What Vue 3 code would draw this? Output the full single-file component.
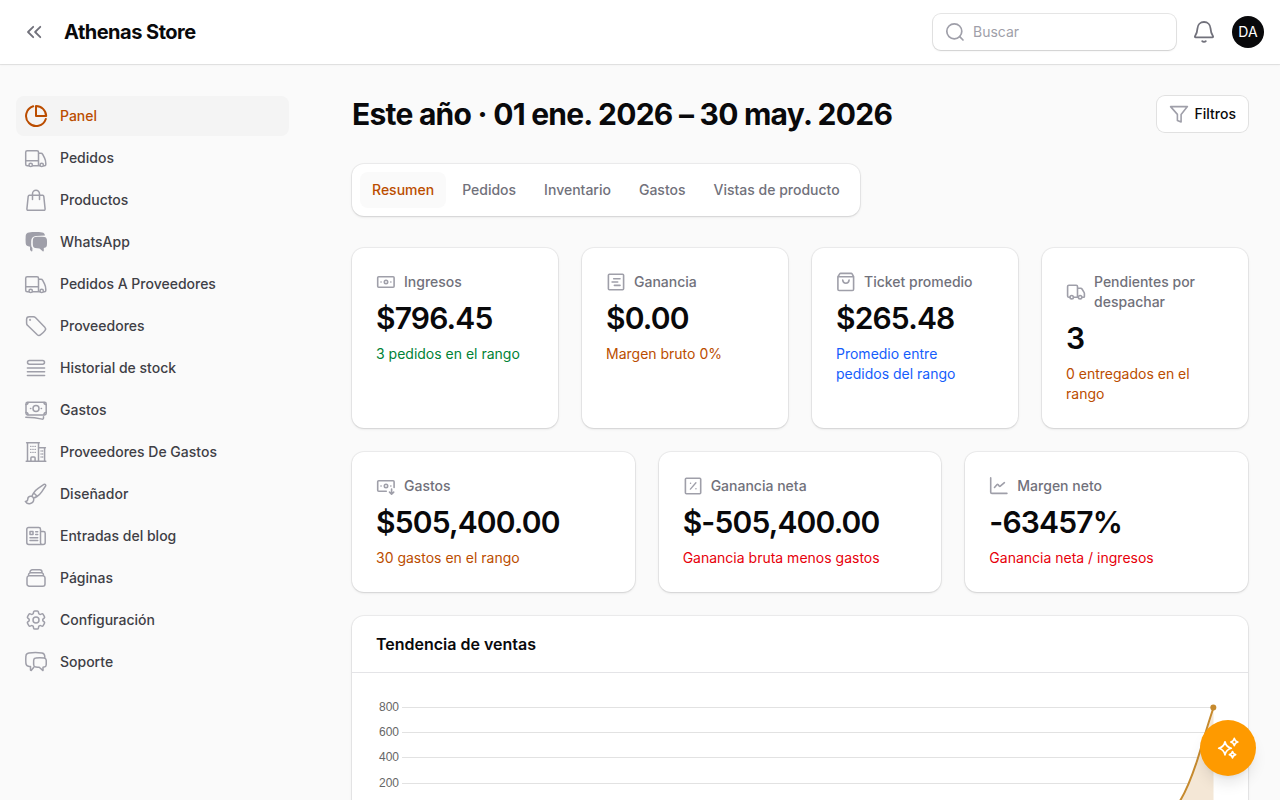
<template>
  <div class="app">
    <header class="topbar">
      <div class="brand">
        <svg class="icon-24 toggle" viewBox="0 0 24 24">
          <path d="M11.2 6.800 6 12l5.200 5.200M18.300 6.800 13.100 12l5.200 5.200" />
        </svg>
        <span class="brand-name">Athenas Store</span>
      </div>
      <div class="topbar-end">
        <div class="search">
          <svg class="icon-20" viewBox="0 0 20 20">
            <circle cx="9.300" cy="9.300" r="7.500" />
            <path d="m14.700 14.700 3.300 3.300" />
          </svg>
          <input type="text" placeholder="Buscar" />
        </div>
        <svg class="icon-24 bell" viewBox="0 0 24 24">
          <path d="M12 2c-3.700 0-6.300 2.800-6.500 6.200-.2 3.300-.8 5.600-2.500 8.100-.3.500 0 1 .6 1h16.800c.6 0 .9-.5.6-1-1.700-2.500-2.300-4.800-2.500-8.100C18.300 4.800 15.700 2 12 2Z" />
          <path d="M10.200 21.100c.4.500 1 .8 1.800.8s1.400-.3 1.800-.8" />
        </svg>
        <div class="avatar">DA</div>
      </div>
    </header>

    <div class="layout">
      <aside class="sidebar">
        <a v-for="item in menu" :key="item.label" class="nav-item" :class="{ active: item.active }">
          <svg class="icon-24" viewBox="0 0 24 24" v-html="icons[item.icon]"></svg>
          <span>{{ item.label }}</span>
        </a>
      </aside>

      <main class="content">
        <div class="page-header">
          <h1>Este año · 01 ene. 2026 – 30 may. 2026</h1>
          <button class="filter-btn">
            <svg class="icon-20" viewBox="0 0 20 20">
              <path d="M1.600 2.600h16.800l-6.300 7.800v7.500l-3.700-1.500v-6L1.600 2.600Z" />
            </svg>
            Filtros
          </button>
        </div>

        <nav class="tabs">
          <button v-for="tab in tabs" :key="tab" :class="{ active: tab === currentTab }" @click="currentTab = tab">
            {{ tab }}
          </button>
        </nav>

        <div class="widgets">
          <div v-for="(row, index) in stats" :key="index" class="stats" :class="'cols-' + row.length">
            <div v-for="stat in row" :key="stat.label" class="card stat">
              <div class="stat-label">
                <svg class="icon-20" viewBox="0 0 20 20" v-html="icons[stat.icon]"></svg>
                <span>{{ stat.label }}</span>
              </div>
              <div class="stat-value">{{ stat.value }}</div>
              <div class="stat-desc" :class="stat.color">{{ stat.desc }}</div>
            </div>
          </div>

          <section class="card chart">
            <h2>Tendencia de ventas</h2>
            <div class="chart-body">
              <svg width="848" height="230" viewBox="0 0 848 230">
                <g v-for="tick in ticks" :key="tick.value">
                  <text x="23" :y="tick.y + 3.5" text-anchor="end">{{ tick.value }}</text>
                  <line x1="26" x2="837" :y1="tick.y" :y2="tick.y" />
                </g>
                <path class="area" d="M837.500 10.500C830 33 826 48 821 64 815 82 810 94 804.500 103 790 130 775 160 750 213H837.500Z" />
                <path class="curve" d="M837.500 10.500C830 33 826 48 821 64 815 82 810 94 804.500 103 790 130 775 160 750 213" />
                <circle cx="837.300" cy="10.500" r="3" />
              </svg>
            </div>
          </section>
        </div>
      </main>
    </div>

    <button class="assistant">
      <svg class="icon-24" viewBox="0 0 24 24">
        <path d="M9 5.800c.9 4 2.300 5.500 6.300 6.500-4 1-5.400 2.500-6.300 6.500-.9-4-2.300-5.500-6.300-6.500 4-1 5.400-2.500 6.300-6.500Z" />
        <path d="M18.300 2.400c.5 2.200 1.300 3.100 3.500 3.600-2.200.5-3 1.400-3.500 3.600-.5-2.200-1.300-3.100-3.500-3.600 2.200-.5 3-1.400 3.500-3.600Z" />
        <path d="M16.500 15.500c.4 1.900 1.100 2.700 3.100 3.100-2 .5-2.700 1.200-3.100 3.200-.4-2-1.100-2.700-3.100-3.200 2-.4 2.700-1.200 3.100-3.100Z" />
      </svg>
    </button>
  </div>
</template>

<script setup>
import { ref } from "vue";

const icons = {
  pie: '<g stroke-width="2"><path d="M9.200 2.300A10.100 10.100 0 1 0 21.800 15"/><path d="M12 2c5.500 0 10 4.300 10.200 10.100H12Z"/></g>',
  truck:
    '<path d="M4.800 19.700H3.200c-.9 0-1.500-.6-1.500-1.500V6.200c0-.9.600-1.500 1.500-1.500h9.800c.9 0 1.500.6 1.500 1.500v13.500H8.600M1.700 14.800h12.800M14.500 7.200h2.500c.8 0 1.300.4 1.700 1.100l1.800 3.600c.9 1.800 1.300 3.600 1.300 5.500v1.200c0 .7-.4 1.100-1.100 1.100h-1.100M14.500 19.700h1.300"/><circle cx="6.700" cy="18.900" r="1.700"/><circle cx="17.700" cy="18.900" r="1.700"/>',
  bag: '<path d="M5.300 7.300h13.400c.6 0 1 .4 1.100 1l1.300 12.600c.1.800-.4 1.400-1.200 1.400H4.100c-.8 0-1.300-.6-1.200-1.400L4.200 8.300c.1-.6.5-1 1.100-1ZM8.500 11.500V5.700a3.500 3.500 0 0 1 7 0v5.800"/>',
  chatSolid:
    '<g fill="currentColor" stroke="none"><path d="M5 2.400c4.300-.5 8.900-.5 13.200 0 1.600.2 2.700 1.500 2.800 3.200l-9 .4C9 6.300 7.300 8.200 7.200 11v4c0 1.300.4 2.300 1.200 3.100v2.600c0 .6-.7.900-1.100.5L6 19.900v-3.200c-2.500-.3-4.200-1.300-4.300-3.400-.2-2.500-.2-5.100 0-7.600.1-1.800 1.500-3.100 3.300-3.300Z"/><path d="M11.300 7c3-.4 6.100-.4 9.100 0 1.400.2 2.300 1.200 2.500 2.600.2 2 .2 3.900 0 5.700-.2 1.300-1 2.300-2.300 2.500l-.8.100v2.800c0 .6-.7.900-1.100.5l-3.200-2.800c-1.500 0-2.800-.1-4.200-.4-1.300-.2-2.200-1.200-2.400-2.500-.2-1.900-.2-3.900 0-5.900.2-1.400 1-2.400 2.400-2.600Z"/></g>',
  tag: '<path d="M9.400 2.700H5.200a2.600 2.600 0 0 0-2.600 2.600v4c0 .8.300 1.500.9 2L13.300 20.700c1 .9 2.300.9 3.400 0 1.900-1.300 3.200-2.600 4.400-4.300.8-1.100.6-2.300-.3-3.200L11.400 3.500a2.900 2.900 0 0 0-2-.8Z"/><circle cx="6.100" cy="5.900" r=".3"/>',
  list: '<rect x="3.500" y="4.500" width="17" height="3.700" rx="1.850"/><path d="M3.400 12h17.200M3.400 15.700h17.200M3.400 19.400h17.200"/>',
  money:
    '<rect x="2" y="4.300" width="20.200" height="12.600" rx="1.600"/><circle cx="12" cy="10.500" r="3"/><path d="M6.500 10.500h.3M17.200 10.500h.3M2 6.600c1.200 0 2-.7 2-2M22 6.600c-1.200 0-2-.7-2-2M2 14.600c1.200 0 2 .7 2 2M22 14.600c-1.200 0-2 .7-2 2M1.800 19.200c5.600 0 11.200.5 16.400 1.900.7.200 1.300-.3 1.300-1v-1.300"/>',
  building:
    '<path d="M2.200 21.300h19.600M3.500 21.300V2.700h11v18.600M2.600 2.700h12.700M14.600 7.800h6v13.500M20.400 7.800h1M6.900 21.100v-3.200c0-.6.400-1 1-1h2.200c.6 0 1 .4 1 1v3.200"/><path stroke-width="1.300" d="M6.600 6.300h.4M8.800 6.300h.4M11 6.300h.4M6.600 9.300h.4M8.800 9.300h.4M11 9.300h.4M6.600 12.300h.4M8.800 12.300h.4M11 12.300h.4M17 11h.2M18.600 11h.2M17 14h.2M18.600 14h.2M17 17h.2M18.600 17h.2"/>',
  brush:
    '<path d="M9.530 16.122a3 3 0 0 0-5.780 1.128 2.250 2.250 0 0 1-2.400 2.245 4.500 4.500 0 0 0 8.400-2.245c0-.399-.078-.78-.22-1.128Zm0 0a15.998 15.998 0 0 0 3.388-1.620m-5.043-.025a15.994 15.994 0 0 1 1.622-3.395m3.420 3.420a15.995 15.995 0 0 0 4.764-4.648l3.876-5.814a1.151 1.151 0 0 0-1.597-1.597L14.146 6.320a15.996 15.996 0 0 0-4.649 4.763m3.420 3.420a6.776 6.776 0 0 0-3.420-3.420"/>',
  news: '<path d="M4.500 3.500h10.300c1 0 1.700.7 1.700 1.700v13.600c0 1 .7 1.700 1.700 1.700H4.700c-1.100 0-1.900-.8-1.900-1.900V5.200c0-1 .7-1.700 1.700-1.700ZM16.500 7.500h3c1 0 1.700.7 1.700 1.700v9.300c0 1.200-.9 2-2.100 2h-1M6 7.400H9v3.200H6ZM11.700 7.700h2M11.700 10.500h2M6 13.700h7.700M6 16.600h7.700"/>',
  stack:
    '<path d="M6 6.878V6a2.250 2.250 0 0 1 2.250-2.250h7.500A2.250 2.250 0 0 1 18 6v.878m-12 0c.235-.083.487-.128.75-.128h10.500c.263 0 .515.045.75.128m-12 0A2.250 2.250 0 0 0 4.500 9v.878m13.500-3A2.250 2.250 0 0 1 19.500 9v.878m0 0a2.246 2.246 0 0 0-.75-.128H5.250c-.263 0-.515.045-.75.128m15 0A2.250 2.250 0 0 1 21 12v6a2.250 2.250 0 0 1-2.250 2.250H5.250A2.250 2.250 0 0 1 3 18v-6c0-.98.626-1.813 1.500-2.122"/>',
  cog: '<path d="M9.594 3.940c.09-.542.56-.94 1.110-.94h2.593c.55 0 1.020.398 1.110.94l.213 1.281c.063.374.313.686.645.87.074.04.147.083.22.127.325.196.72.257 1.075.124l1.217-.456a1.125 1.125 0 0 1 1.370.49l1.296 2.247a1.125 1.125 0 0 1-.26 1.431l-1.003.827c-.293.241-.438.613-.43.992a7.723 7.723 0 0 1 0 .255c-.008.378.137.75.43.991l1.004.827c.424.35.534.955.26 1.430l-1.298 2.247a1.125 1.125 0 0 1-1.369.491l-1.217-.456c-.355-.133-.75-.072-1.076.124a6.470 6.470 0 0 1-.22.128c-.331.183-.581.495-.644.869l-.213 1.281c-.09.543-.56.94-1.110.94h-2.594c-.55 0-1.019-.398-1.110-.94l-.213-1.281c-.062-.374-.312-.686-.644-.87a6.520 6.520 0 0 1-.22-.127c-.325-.196-.72-.257-1.076-.124l-1.217.456a1.125 1.125 0 0 1-1.369-.49l-1.297-2.247a1.125 1.125 0 0 1 .26-1.431l1.004-.827c.292-.24.437-.613.43-.991a6.932 6.932 0 0 1 0-.255c.007-.38-.138-.751-.43-.992l-1.004-.827a1.125 1.125 0 0 1-.26-1.430l1.297-2.247a1.125 1.125 0 0 1 1.370-.491l1.216.456c.356.133.751.072 1.076-.124.072-.044.146-.086.22-.128.332-.183.582-.495.644-.869l.214-1.280Z"/><circle cx="12" cy="12" r="3"/>',
  chat: '<path d="M9.800 17.200 7.400 20.200c-.3.400-.9.200-.9-.3v-3.300H5.200c-2-.3-3.200-1.300-3.300-3.300-.2-2.500-.2-5 0-7.400.1-1.700 1.300-2.800 3-3 4.200-.4 8.700-.4 12.900 0 1.600.2 2.700 1.300 2.900 2.900l.1 2"/><path d="M11.800 7.900c2.700-.3 5.600-.3 8.300 0 1.200.2 2 .9 2.100 2.100.1 1.700.1 3.300 0 5-.1 1.200-.9 2-2.100 2.100l-1.100.1v3.400l-3.800-3.300c-1.200 0-2.300-.1-3.400-.2-1.200-.1-2-.9-2.100-2.100-.1-1.700-.1-3.300 0-5 .1-1.200.9-2 2.100-2.100Z"/>',
  banknote:
    '<rect x="1.700" y="4.700" width="16.400" height="10.500" rx="1"/><circle cx="10" cy="10" r="1.700"/><path d="M5 10h.1M14.800 10h.1"/>',
  receipt: '<rect x="2.400" y="2.200" width="15.200" height="15.500" rx="1"/><path d="M7.700 6.700h6.300M6.100 10h5.600M8.400 13.400h5.600"/>',
  shopping:
    '<path d="M1.900 4.700 3.700 1.900c.2-.3.500-.5.900-.5h10.600c.4 0 .7.200.9.500l1.500 2.800v12.500c0 .8-.5 1.300-1.300 1.300H3.200c-.8 0-1.300-.5-1.300-1.300ZM1.900 4.700h15.700M6.700 8c.2 2.100 1.500 3.200 3.200 3.200s3-1.100 3.200-3.200"/>',
  delivery:
    '<path d="M3.700 15.200h-.8c-.8 0-1.300-.5-1.300-1.300V4.600c0-.8.500-1.300 1.300-1.300h7.300c.8 0 1.300.5 1.300 1.300v10.600H7.700M11.500 6.300h3.200c.6 0 1 .2 1.300.7l1.900 3.100c.3.500.5 1 .5 1.500v2.800c0 .5-.3.800-.8.800h-1.400M11.500 15.200h.6"/><circle cx="5.700" cy="15.200" r="1.700"/><circle cx="14.100" cy="15.200" r="1.700"/>',
  expense:
    '<path d="M10.300 15.200H2.700c-.6 0-1-.4-1-1V5.700c0-.6.400-1 1-1h14.400c.6 0 1 .4 1 1v5.800M15.600 13.100v5M13.500 16.100l2.100 2.100 2.100-2.100"/><circle cx="10" cy="10" r="1.700"/><path d="M5 10h.1M14.800 10h.1"/>',
  percent:
    '<rect x="2.400" y="2.200" width="15.300" height="15.500" rx="1"/><path stroke-width="1.400" d="m7.400 13.100 5.500-6.300M7.500 7.200h.1M12.900 12.700h.1"/>',
  trend: '<path d="M1.700 1.900v14.300c0 .7.500 1.200 1.200 1.200h15M5.500 11.500l2.600-3c.3-.3.600-.3.900 0l1.400 1.700c.3.300.6.300.9 0l4.100-3.500"/>',
};

const menu = [
  { label: "Panel", icon: "pie", active: true },
  { label: "Pedidos", icon: "truck" },
  { label: "Productos", icon: "bag" },
  { label: "WhatsApp", icon: "chatSolid" },
  { label: "Pedidos A Proveedores", icon: "truck" },
  { label: "Proveedores", icon: "tag" },
  { label: "Historial de stock", icon: "list" },
  { label: "Gastos", icon: "money" },
  { label: "Proveedores De Gastos", icon: "building" },
  { label: "Diseñador", icon: "brush" },
  { label: "Entradas del blog", icon: "news" },
  { label: "Páginas", icon: "stack" },
  { label: "Configuración", icon: "cog" },
  { label: "Soporte", icon: "chat" },
];

const tabs = ["Resumen", "Pedidos", "Inventario", "Gastos", "Vistas de producto"];
const currentTab = ref("Resumen");

const stats = [
  [
    { label: "Ingresos", icon: "banknote", value: "$796.45", desc: "3 pedidos en el rango", color: "success" },
    { label: "Ganancia", icon: "receipt", value: "$0.00", desc: "Margen bruto 0%", color: "warning" },
    { label: "Ticket promedio", icon: "shopping", value: "$265.48", desc: "Promedio entre pedidos del rango", color: "info" },
    { label: "Pendientes por despachar", icon: "delivery", value: "3", desc: "0 entregados en el rango", color: "warning" },
  ],
  [
    { label: "Gastos", icon: "expense", value: "$505,400.00", desc: "30 gastos en el rango", color: "warning" },
    { label: "Ganancia neta", icon: "percent", value: "$-505,400.00", desc: "Ganancia bruta menos gastos", color: "danger" },
    { label: "Margen neto", icon: "trend", value: "-63457%", desc: "Ganancia neta / ingresos", color: "danger" },
  ],
];

const ticks = [
  { value: 800, y: 10.5 },
  { value: 600, y: 35.5 },
  { value: 400, y: 60.5 },
  { value: 200, y: 86.5 },
];
</script>

<style>
body {
  background: #fafafa;
  overflow: hidden;
}
</style>

<style scoped>
.app {
  height: 800px;
  overflow: hidden;
  background: #fafafa;
  color: #09090b;
  font-family: Inter, "Liberation Sans", sans-serif;
  font-size: 14px;
  line-height: 20px;
}

button {
  font: inherit;
  border: 0;
  padding: 0;
}

svg {
  flex-shrink: 0;
}

.icon-24,
.icon-20 {
  width: 24px;
  height: 24px;
  fill: none;
  stroke: currentColor;
  stroke-width: 1.5;
  stroke-linecap: round;
  stroke-linejoin: round;
  color: #9f9fa9;
}

.icon-20 {
  width: 20px;
  height: 20px;
  stroke-width: 1.6;
}

/* Topbar */
.topbar {
  position: relative;
  display: flex;
  align-items: center;
  justify-content: space-between;
  height: 64px;
  padding: 0 16px 0 22px;
  box-sizing: border-box;
  background: #fff;
  box-shadow: 0 0 0 1px rgba(9, 9, 11, 0.07), 0 1px 2px rgba(0, 0, 0, 0.06);
}

.brand,
.topbar-end {
  display: flex;
  align-items: center;
}

.brand {
  gap: 18px;
}

.toggle,
.bell {
  color: #71717b;
  stroke-width: 1.8;
}

.brand-name {
  font-size: 20px;
  font-weight: 700;
  letter-spacing: -0.025em;
}

.topbar-end {
  gap: 16px;
}

.search {
  display: flex;
  align-items: center;
  gap: 8px;
  width: 243px;
  height: 36px;
  padding: 0 12px;
  box-sizing: border-box;
  background: #fff;
  border-radius: 8px;
  box-shadow: 0 0 0 1px rgba(9, 9, 11, 0.1), 0 1px 2px rgba(0, 0, 0, 0.1);
}

.search .icon-20 {
  stroke-width: 1.7;
}

.search input {
  flex: 1;
  min-width: 0;
  padding: 0;
  border: 0;
  outline: 0;
  background: none;
  font: inherit;
}

.search input::placeholder {
  color: #9f9fa9;
}

.avatar {
  width: 32px;
  height: 32px;
  border-radius: 50%;
  background: #09090b;
  color: #fff;
  line-height: 32px;
  text-align: center;
}

/* Layout */
.layout {
  display: flex;
}

.sidebar {
  display: flex;
  flex-direction: column;
  gap: 2px;
  width: 320px;
  padding: 32px 31px 0 16px;
  box-sizing: border-box;
}

.nav-item {
  display: flex;
  align-items: center;
  gap: 12px;
  height: 40px;
  padding: 0 8px;
  box-sizing: border-box;
  border-radius: 8px;
  color: #3f3f46;
  font-weight: 500;
}

.nav-item.active {
  background: #f4f4f4;
  color: #bb4d00;
}

.nav-item.active .icon-24 {
  color: #bb4d00;
}

.content {
  flex: 1;
  padding: 32px 32px 0;
}

.page-header {
  display: flex;
  align-items: center;
  justify-content: space-between;
  height: 36px;
}

h1 {
  margin: 0;
  font-size: 30px;
  line-height: 36px;
  font-weight: 700;
  letter-spacing: -0.025em;
}

.filter-btn {
  display: flex;
  align-items: center;
  gap: 6px;
  height: 36px;
  padding: 0 12px;
  border-radius: 8px;
  background: #fff;
  color: #09090b;
  font-weight: 500;
  box-shadow: 0 0 0 1px rgba(9, 9, 11, 0.1);
}

/* Tabs */
.tabs {
  display: flex;
  gap: 4px;
  width: fit-content;
  margin: 32px 0;
  padding: 8px;
  background: #fff;
  border-radius: 12px;
  box-shadow: 0 0 0 1px rgba(9, 9, 11, 0.05), 0 1px 3px rgba(0, 0, 0, 0.1), 0 1px 2px -1px rgba(0, 0, 0, 0.1);
}

.tabs button {
  padding: 8px 12px;
  border-radius: 8px;
  background: none;
  color: #71717b;
  font-weight: 500;
}

.tabs button.active {
  background: #fafafa;
  color: #bb4d00;
}

/* Widgets */
.widgets,
.stats {
  display: grid;
  gap: 24px;
}

.cols-4 {
  grid-template-columns: repeat(4, minmax(0, 1fr));
}

.cols-3 {
  grid-template-columns: repeat(3, minmax(0, 1fr));
}

.card {
  background: #fff;
  border-radius: 12px;
  box-shadow: 0 0 0 1px rgba(9, 9, 11, 0.05), 0 1px 3px rgba(0, 0, 0, 0.1), 0 1px 2px -1px rgba(0, 0, 0, 0.1);
}

.stat {
  display: flex;
  flex-direction: column;
  gap: 8px;
  padding: 24px;
}

.stat-label {
  display: flex;
  align-items: center;
  gap: 8px;
  color: #71717b;
  font-weight: 500;
}

.stat-value {
  font-size: 30px;
  line-height: 36px;
  font-weight: 600;
  letter-spacing: -0.028em;
}

.success {
  color: #008236;
}

.warning {
  color: #bb4d00;
}

.info {
  color: #155dfc;
}

.danger {
  color: #e7000b;
}

.chart h2 {
  margin: 0;
  padding: 16px 24px;
  font-size: 16px;
  line-height: 24px;
  font-weight: 600;
  border-bottom: 1px solid #e4e4e7;
}

.chart-body {
  padding: 24px;
}

.chart-body text {
  font-family: "Liberation Sans", Arial, sans-serif;
  font-size: 12px;
  fill: #666;
}

.chart-body line {
  stroke: #e2e2e2;
}

.area {
  fill: #f4e7d6;
}

.curve {
  fill: none;
  stroke: #c68a2e;
  stroke-width: 2;
}

.chart-body circle {
  fill: #c68a2e;
}

/* Assistant button */
.assistant {
  position: fixed;
  right: 24px;
  bottom: 24px;
  display: flex;
  align-items: center;
  justify-content: center;
  width: 56px;
  height: 56px;
  border-radius: 50%;
  background: #fe9a00;
  box-shadow: 0 10px 15px -3px rgba(0, 0, 0, 0.1), 0 4px 6px -4px rgba(0, 0, 0, 0.1);
}

.assistant .icon-24 {
  color: #fff;
  stroke-width: 1.7;
}
</style>
